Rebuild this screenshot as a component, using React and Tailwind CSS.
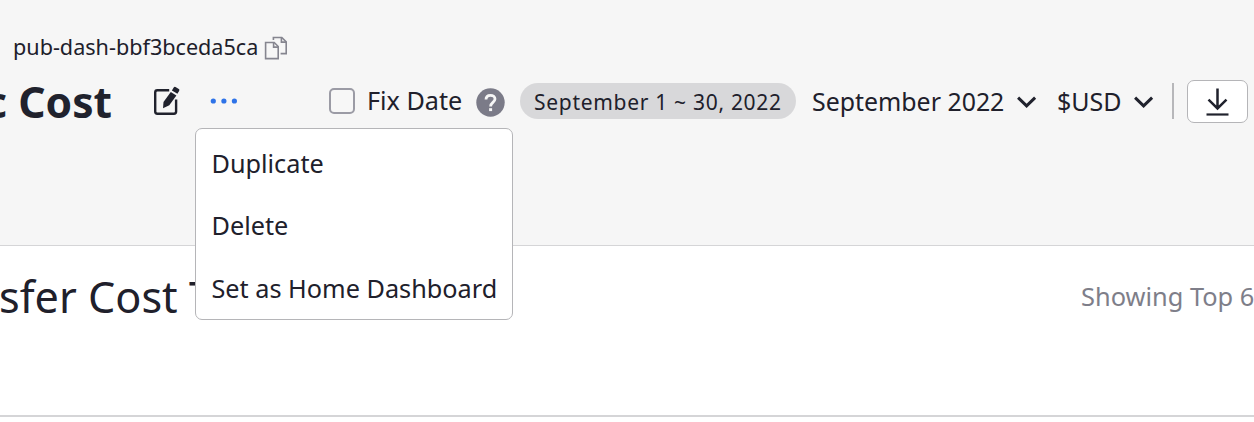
import React from "react";

function CopyIcon() {
  return (
    <svg className="ml-[6px] h-[24px] w-[24px] shrink-0" viewBox="0 0 24 24" fill="none" stroke="#85858f" strokeWidth="1.6">
      <path d="M1.6 6.5H10.2L14.2 10.5V22.6H1.6Z" />
      <path d="M9.6 6.5V11.1H14.2" />
      <path d="M9.4 4V1.5H17.8L22.2 5.9V17.6H16.6" />
      <path d="M17.4 1.5V6.1H22.2" />
    </svg>
  );
}

function EditIcon() {
  return (
    <svg className="h-[32px] w-[30px] shrink-0" viewBox="0 0 30 32" fill="none">
      <path d="M17.2 5.3H5.4A2.2 2.2 0 0 0 3.2 7.5V26.6A2.2 2.2 0 0 0 5.4 28.8H21.9A2.2 2.2 0 0 0 24.1 26.6V14.5" stroke="#20222d" strokeWidth="2.4" />
      <path d="M18.8 7L24.4 10.6L17.3 20.2L11 23.2L11.5 16.9Z" fill="#20222d" />
      <path d="M19.9 5.4L21.7 2.5Q22.4 1.3 23.5 1.9L26.8 4Q27.9 4.8 27.1 5.9L25.4 8.7Z" fill="#20222d" />
    </svg>
  );
}

function HelpIcon() {
  return (
    <svg className="h-[29px] w-[29px] shrink-0" viewBox="0 0 29 29" fill="none">
      <circle cx="14.5" cy="14.5" r="14.2" fill="#7b7b88" />
      <path d="M10 11.6C10 8.9 11.9 7.3 14.5 7.3C17.1 7.3 19 8.9 19 11.1C19 14.3 14.6 14.6 14.6 18.4" stroke="#f6f6f6" strokeWidth="2.8" />
      <rect x="13.1" y="20.2" width="3" height="2.9" fill="#f6f6f6" />
    </svg>
  );
}

function Chevron() {
  return (
    <svg className="-ml-[0.5px] h-[14px] w-[20px] shrink-0" viewBox="0 0 20 14" fill="none" stroke="#20222d" strokeWidth="3">
      <path d="M1.1 3.6L9.6 11.8L18.1 3.6" />
    </svg>
  );
}

function DownloadIcon() {
  return (
    <svg className="h-[30px] w-[24px]" viewBox="0 0 24 30" fill="none" stroke="#20222d">
      <path d="M11.5 2.5V22.5M2.5 13.7L11.5 22.5L20.5 13.7" strokeWidth="2.5" />
      <path d="M0.5 28.5H22.5" strokeWidth="2.2" />
    </svg>
  );
}

function ActionMenu() {
  return (
    <ul className="absolute top-[128px] left-[195px] z-10 flex h-[192px] w-[318px] flex-col rounded-[7px] border border-[#b5b5b8] bg-white px-[15.5px] pt-[4px] text-[25.25px]">
      <li className="flex h-[62px] shrink-0 items-center whitespace-nowrap">Duplicate</li>
      <li className="flex h-[62px] shrink-0 items-center whitespace-nowrap">Delete</li>
      <li className="flex h-[63px] shrink-0 items-center whitespace-nowrap">Set as Home Dashboard</li>
    </ul>
  );
}

export default function App() {
  return (
    <div className="relative h-[422px] w-[1254px] overflow-hidden bg-white font-['Noto_Sans',sans-serif] text-[#20202b]">
      <header className="h-[246px] border-b border-[#d5d5d7] bg-[#f6f6f6]">
        <div className="flex h-[79px] items-center pt-[17px] pl-[13px] text-[21.6px]">
          <span className="-mt-[2px] whitespace-nowrap">pub-dash-bbf3bceda5ca</span>
          <CopyIcon />
        </div>
        <div className="flex h-[44px] items-center">
          <h1 className="flex w-[112px] shrink-0 justify-end text-[42.6px] font-bold leading-[44px] whitespace-nowrap text-[#20222d]">
            c Cost
          </h1>
          <div className="flex w-[217px] shrink-0 items-center pl-[40px]">
            <EditIcon />
            <svg className="ml-[28px] h-[6px] w-[28px]" viewBox="0 0 28 6" fill="#2e73e8">
              <circle cx="3.3" cy="3" r="2.6" />
              <circle cx="13.9" cy="3" r="2.6" />
              <circle cx="24.4" cy="3" r="2.6" />
            </svg>
          </div>
          <label className="flex w-[147px] shrink-0 items-center text-[25.2px]">
            <span className="mr-[12px] h-[26px] w-[26px] shrink-0 rounded-[5px] border-2 border-[#9b9ba5] bg-[#f7f7f7]" />
            <span className="-mt-[1px] whitespace-nowrap">Fix Date</span>
          </label>
          <div className="flex w-[44px] shrink-0 pt-[3px]">
            <HelpIcon />
          </div>
          <div className="flex h-[36px] w-[276px] shrink-0 items-center rounded-full bg-[#d8d8da] pt-[3px] pl-[14px] text-[21px] tracking-[0.7px] whitespace-nowrap">
            September 1 ~ 30, 2022
          </div>
          <div className="ml-[16px] flex w-[245px] shrink-0 items-center text-[24.9px] whitespace-nowrap">
            <span className="w-[205px] pt-[2px]">September 2022</span>
            <Chevron />
          </div>
          <div className="flex w-[115px] shrink-0 items-center text-[25px] whitespace-nowrap">
            <span className="w-[77px] pt-[2px]">$USD</span>
            <Chevron />
          </div>
          <div className="h-[36px] w-[2px] shrink-0 bg-[#b7b7ba]" />
          <button className="ml-[13px] flex h-[43px] w-[61px] shrink-0 items-center justify-center rounded-[7px] border border-[#b5b5b8] bg-white">
            <DownloadIcon />
          </button>
        </div>
      </header>
      <section className="flex h-[171px] items-start justify-between border-b-2 border-[#d5d5d7] pt-[21px]">
        <h2 className="-ml-[1px] text-[43.2px] leading-[60px] whitespace-nowrap">sfer Cost T</h2>
        <p className="-mt-[1px] w-[173px] text-[25.4px] leading-[60px] whitespace-nowrap text-[#7e7e89]">Showing Top 6</p>
      </section>
      <ActionMenu />
    </div>
  );
}
